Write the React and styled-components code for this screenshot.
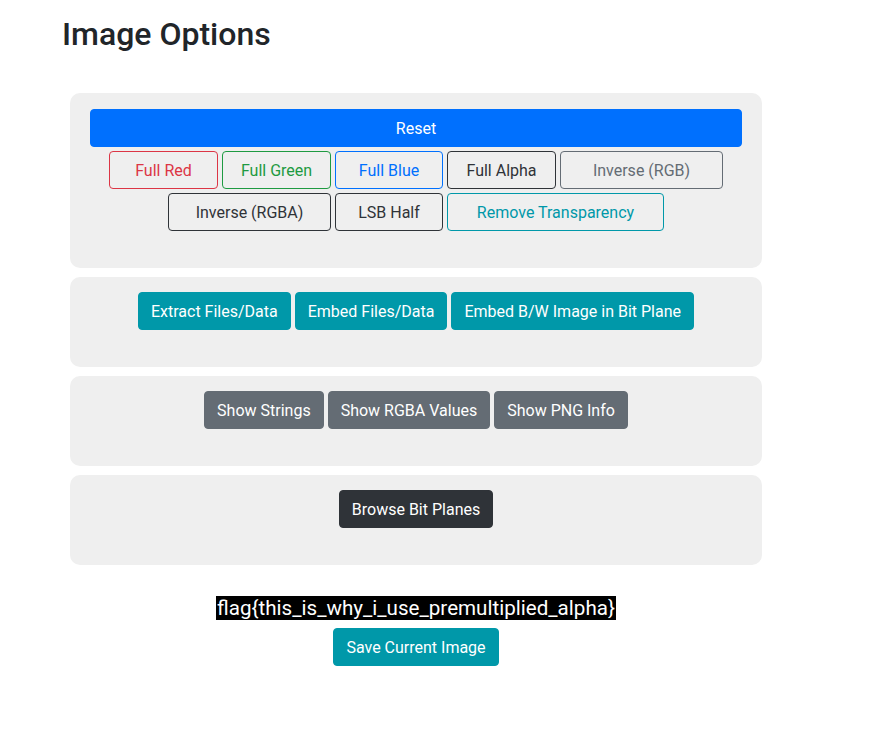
import React from 'react';
import styled, { createGlobalStyle } from 'styled-components';

const GlobalStyle = createGlobalStyle`
  body {
    margin: 0;
    background: #ffffff;
    font-family: Roboto, 'Liberation Sans', sans-serif;
    color: #212529;
  }
`;

const colors = {
  primary: '#0070fe',
  danger: '#dc3545',
  success: '#1e9a41',
  dark: '#2f3338',
  secondary: '#646c74',
  info: '#0098a9',
};

const Page = styled.div`
  width: 712px;
  padding: 15px 0 40px 60px;
`;

const Title = styled.h2`
  margin: 0 0 40px 2px;
  font-size: 32px;
  font-weight: 500;
  line-height: 1.2;
  color: #212529;
`;

const Panel = styled.section`
  margin: 0 10px 9px;
  padding: ${(p) => (p.$first ? '16px 20px 37px' : '15px 20px 37px')};
  background: #efefef;
  border-radius: 10px;
  display: flex;
  flex-direction: column;
  gap: 4px;
`;

const Row = styled.div`
  display: flex;
  flex-wrap: wrap;
  justify-content: center;
  gap: 4px;
`;

const Button = styled.button`
  box-sizing: border-box;
  height: 38px;
  width: ${(p) => (p.$width ? `${p.$width}px` : 'auto')};
  padding: 0 12px;
  font-family: Roboto, 'Liberation Sans', sans-serif;
  font-size: 16px;
  border-radius: 4px;
  cursor: pointer;
  border: 1px solid ${(p) => colors[p.$tone]};
  background: ${(p) => (p.$outline ? 'transparent' : colors[p.$tone])};
  color: ${(p) => (p.$outline ? colors[p.$tone] : '#ffffff')};
`;

const WideButton = styled(Button)`
  width: 100%;
`;

const Footer = styled.div`
  display: flex;
  flex-direction: column;
  align-items: center;
  gap: 8px;
  margin-top: 31px;
`;

const Flag = styled.span`
  display: inline-block;
  background: #000000;
  color: #ffffff;
  font-size: 20.6px;
  line-height: 24px;
  padding: 0 1px;
`;

export default function App() {
  return (
    <>
      <GlobalStyle />
      <Page>
        <Title>Image Options</Title>

        <Panel $first>
          <WideButton $tone="primary">Reset</WideButton>
          <Row>
            <Button $outline $tone="danger" $width={109}>Full Red</Button>
            <Button $outline $tone="success" $width={109}>Full Green</Button>
            <Button $outline $tone="primary" $width={108}>Full Blue</Button>
            <Button $outline $tone="dark" $width={109}>Full Alpha</Button>
            <Button $outline $tone="secondary" $width={163}>Inverse (RGB)</Button>
          </Row>
          <Row>
            <Button $outline $tone="dark" $width={163}>Inverse (RGBA)</Button>
            <Button $outline $tone="dark" $width={108}>LSB Half</Button>
            <Button $outline $tone="info" $width={217}>Remove Transparency</Button>
          </Row>
        </Panel>

        <Panel>
          <Row>
            <Button $tone="info">Extract Files/Data</Button>
            <Button $tone="info">Embed Files/Data</Button>
            <Button $tone="info">Embed B/W Image in Bit Plane</Button>
          </Row>
        </Panel>

        <Panel>
          <Row>
            <Button $tone="secondary">Show Strings</Button>
            <Button $tone="secondary">Show RGBA Values</Button>
            <Button $tone="secondary">Show PNG Info</Button>
          </Row>
        </Panel>

        <Panel>
          <Row>
            <Button $tone="dark">Browse Bit Planes</Button>
          </Row>
        </Panel>

        <Footer>
          <Flag>flag{'{'}this_is_why_i_use_premultiplied_alpha{'}'}</Flag>
          <Button $tone="info">Save Current Image</Button>
        </Footer>
      </Page>
    </>
  );
}
